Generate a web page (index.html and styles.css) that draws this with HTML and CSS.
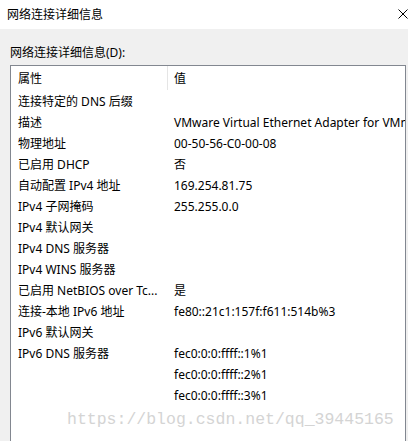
FILE: index.html
```html
<!DOCTYPE html>
<html lang="zh-CN">
<head>
<meta charset="utf-8">
<title>网络连接详细信息</title>
<link rel="stylesheet" href="styles.css">
</head>
<body>
<div class="window">
  <div class="titlebar">
    <span class="title">网络连接详细信息</span>
    <svg class="close" width="10" height="10" viewBox="0 0 10 10"><path d="M0.5 0.5 L9.5 9.5 M9.5 0.5 L0.5 9.5" stroke="#000" stroke-width="1" fill="none"/></svg>
  </div>
  <div class="content">
    <div class="label">网络连接详细信息(D):</div>
    <div class="listbox">
      <div class="header">
        <div class="hcell prop">属性</div>
        <div class="hsep"></div>
        <div class="hcell val">值</div>
      </div>
      <div class="row"><div class="prop">连接特定的 DNS 后缀</div><div class="val"></div></div>
      <div class="row"><div class="prop">描述</div><div class="val">VMware Virtual Ethernet Adapter for VMnet8</div></div>
      <div class="row"><div class="prop">物理地址</div><div class="val">00-50-56-C0-00-08</div></div>
      <div class="row"><div class="prop">已启用 DHCP</div><div class="val">否</div></div>
      <div class="row"><div class="prop">自动配置 IPv4 地址</div><div class="val">169.254.81.75</div></div>
      <div class="row"><div class="prop">IPv4 子网掩码</div><div class="val">255.255.0.0</div></div>
      <div class="row"><div class="prop">IPv4 默认网关</div><div class="val"></div></div>
      <div class="row"><div class="prop">IPv4 DNS 服务器</div><div class="val"></div></div>
      <div class="row"><div class="prop">IPv4 WINS 服务器</div><div class="val"></div></div>
      <div class="row"><div class="prop">已启用 NetBIOS over Tc...</div><div class="val">是</div></div>
      <div class="row"><div class="prop">连接-本地 IPv6 地址</div><div class="val">fe80::21c1:157f:f611:514b%3</div></div>
      <div class="row"><div class="prop">IPv6 默认网关</div><div class="val"></div></div>
      <div class="row"><div class="prop">IPv6 DNS 服务器</div><div class="val">fec0:0:0:ffff::1%1</div></div>
      <div class="row"><div class="prop"></div><div class="val">fec0:0:0:ffff::2%1</div></div>
      <div class="row"><div class="prop"></div><div class="val">fec0:0:0:ffff::3%1</div></div>
      <div class="row"><div class="prop"></div><div class="val"></div></div>
    </div>
  </div>
  <div class="watermark">https://blog.csdn.net/qq_39445165</div>
</div>
</body>
</html>
```

FILE: styles.css
```css
html, body {
  margin: 0;
  padding: 0;
}
body {
  width: 408px;
  height: 441px;
  overflow: hidden;
  font-family: "Noto Sans", "Noto Sans CJK SC", sans-serif;
  font-size: 12px;
  color: #000;
  background: #f0f0f0;
}
.window {
  position: relative;
  width: 408px;
  height: 441px;
  display: flex;
  flex-direction: column;
}
.titlebar {
  height: 29px;
  background: #fff;
  display: flex;
  align-items: center;
  justify-content: space-between;
  padding-left: 7px;
  box-sizing: border-box;
}
.title {
  line-height: 28px;
}
.close {
  display: block;
  margin-top: -1px;
}
.content {
  flex: 1;
  background: #f0f0f0;
  padding: 15px 2px 0 10px;
  display: flex;
  flex-direction: column;
  min-height: 0;
}
.label {
  line-height: 17px;
  margin-bottom: 4px;
}
.listbox {
  flex: 1;
  background: #fff;
  border: 1px solid #828790;
  border-bottom: none;
  overflow: hidden;
}
.header {
  display: grid;
  grid-template-columns: 156px 1px 1fr;
  height: 24px;
  align-items: stretch;
}
.hcell {
  padding-top: 2px;
  line-height: 22px;
}
.hsep {
  background: #e5e5e5;
  height: 24px;
}
.row {
  display: grid;
  grid-template-columns: 157px 1fr;
  height: 21px;
}
.prop {
  padding-left: 7px;
  white-space: nowrap;
  overflow: hidden;
}
.val {
  padding-left: 6px;
  white-space: nowrap;
  overflow: hidden;
}
.row .prop, .row .val {
  padding-top: 2px;
  line-height: 19px;
}
.watermark {
  position: absolute;
  left: 67px;
  top: 409px;
  font-family: "Liberation Mono", monospace;
  font-size: 16.5px;
  line-height: 22px;
  color: #d4d4d4;
  white-space: nowrap;
  pointer-events: none;
}
```
